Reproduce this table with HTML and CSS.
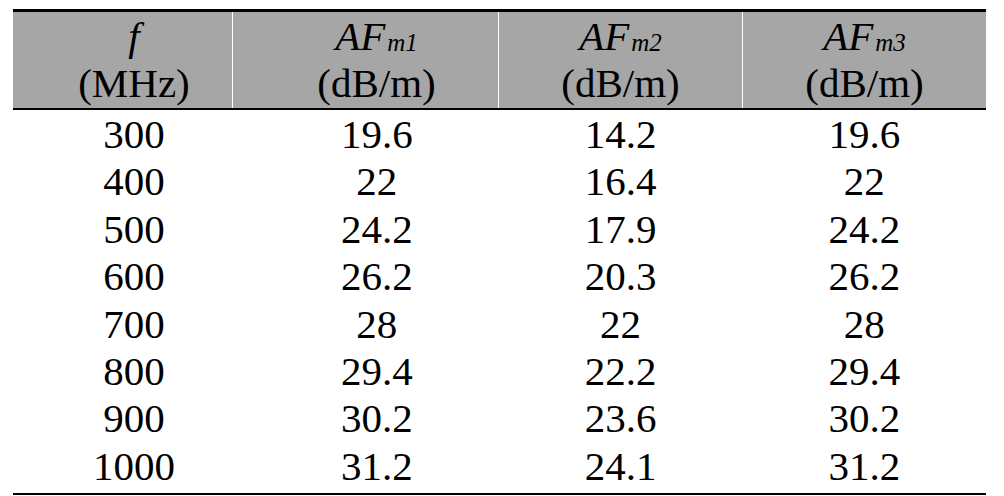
FILE: index.html
```html
<!DOCTYPE html>
<html>
<head>
<meta charset="utf-8">
<link rel="stylesheet" href="styles.css">
</head>
<body>
<div class="wrap">
<table class="data">
  <thead>
    <tr>
      <th class="c1"><span class="var">f</span><br>(MHz)</th>
      <th class="c2"><span class="var">AF<sub>m1</sub></span><br>(dB/m)</th>
      <th class="c3"><span class="var">AF<sub>m2</sub></span><br>(dB/m)</th>
      <th class="c4"><span class="var">AF<sub>m3</sub></span><br>(dB/m)</th>
    </tr>
  </thead>
  <tbody>
    <tr class="first"><td>300</td><td>19.6</td><td>14.2</td><td>19.6</td></tr>
    <tr><td>400</td><td>22</td><td>16.4</td><td>22</td></tr>
    <tr><td>500</td><td>24.2</td><td>17.9</td><td>24.2</td></tr>
    <tr><td>600</td><td>26.2</td><td>20.3</td><td>26.2</td></tr>
    <tr><td>700</td><td>28</td><td>22</td><td>28</td></tr>
    <tr><td>800</td><td>29.4</td><td>22.2</td><td>29.4</td></tr>
    <tr><td>900</td><td>30.2</td><td>23.6</td><td>30.2</td></tr>
    <tr class="last"><td>1000</td><td>31.2</td><td>24.1</td><td>31.2</td></tr>
  </tbody>
</table>
</div>
</body>
</html>
```

FILE: styles.css
```css
html, body {
  margin: 0;
  padding: 0;
  background: #ffffff;
}

.wrap {
  padding: 9px 0 0 13px;
}

.data {
  width: 971px;
  border-collapse: collapse;
  table-layout: fixed;
  font-family: "Liberation Serif", "Times New Roman", serif;
  font-size: 41px;
  color: #000;
}

.data th {
  background: #a6a6a6;
  font-weight: normal;
  line-height: 47px;
  padding: 1px 0 1px 0;
  text-align: center;
  vertical-align: top;
  position: relative;
  border-top: 3px solid #000;
  border-bottom: 2px solid #000;
}

.data th.c1 { width: 242px; }
.data th.c2 { width: 243px; }
.data th.c3 { width: 243px; }
.data th.c4 { width: 243px; }

.data th.c3,
.data th.c4 {
  border-left: 1px solid #ffffff;
}

.data th.c1::after {
  content: "";
  position: absolute;
  top: 0;
  bottom: 0;
  right: 22px;
  width: 1px;
  background: #ffffff;
}

.var {
  font-style: italic;
}

.var sub {
  font-size: 25px;
  line-height: 0;
  vertical-align: baseline;
  position: relative;
  top: 1px;
  margin-left: 2px;
}

.data td {
  text-align: center;
  line-height: 47.4px;
  padding: 0;
}

.data tr.first td {
  padding-top: 1px;
}

.data tr.last td {
  padding-bottom: 3px;
  border-bottom: 2px solid #000;
}
```
